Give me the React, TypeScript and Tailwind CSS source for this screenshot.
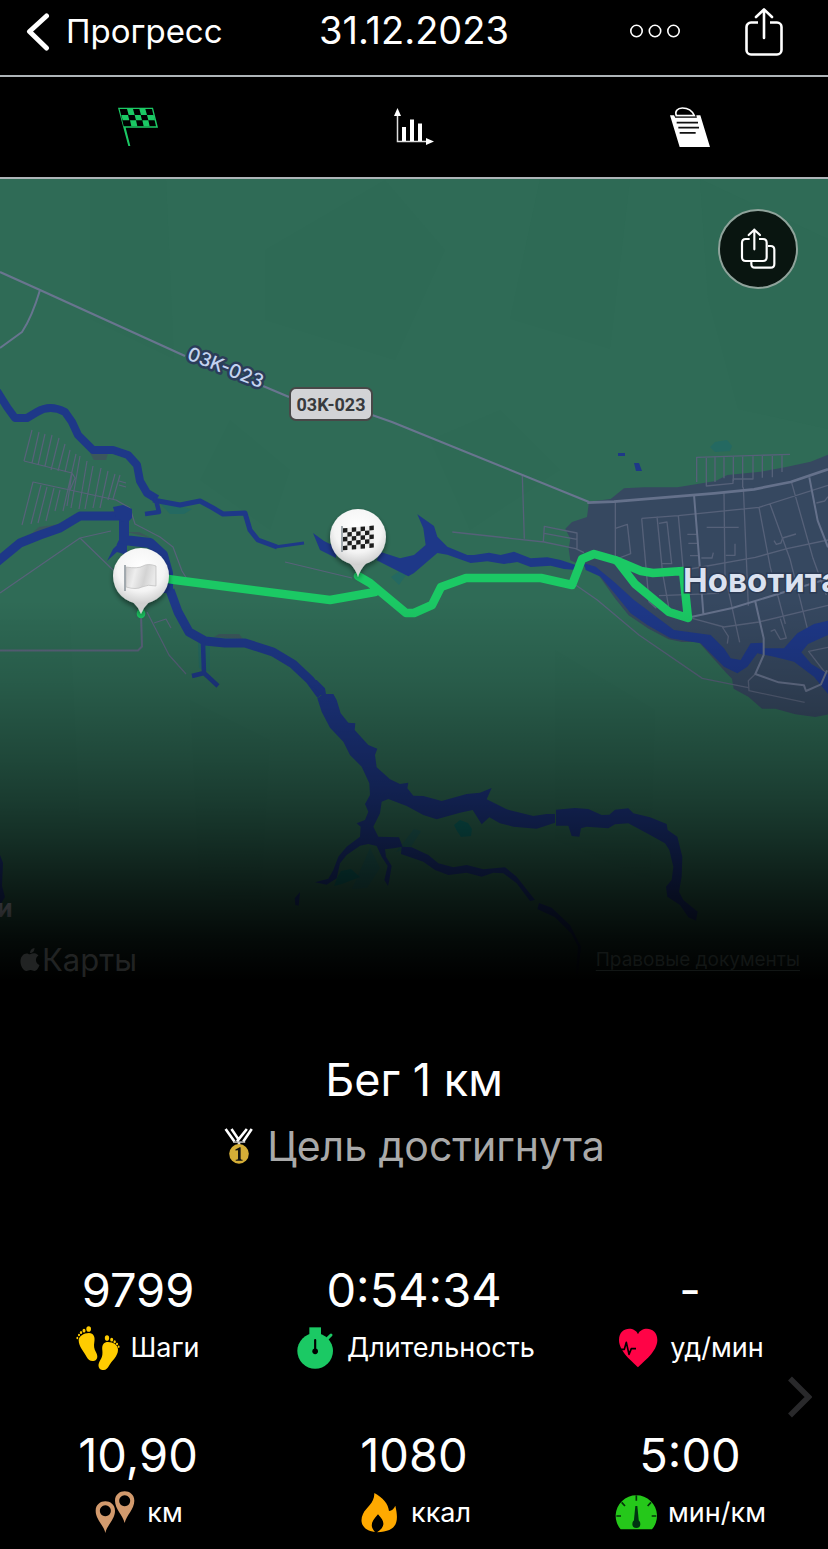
import type { ReactNode } from "react";

const GREEN = "#1bc964";

function BackIcon() {
  return (
    <svg className="h-10 w-6" viewBox="0 0 24 40" fill="none" stroke="#fff" strokeWidth="5" strokeLinecap="round" strokeLinejoin="round" aria-hidden="true">
      <path d="M20.5 4 3.500 19.500 20.5 36" />
    </svg>
  );
}

function MoreIcon() {
  return (
    <svg className="h-4 w-13" viewBox="0 0 52 16" fill="none" stroke="#fff" strokeWidth="1.6" aria-hidden="true">
      <circle cx="8.5" cy="7" r="5.7" />
      <circle cx="27" cy="7" r="5.7" />
      <circle cx="45.5" cy="7" r="5.7" />
    </svg>
  );
}

function ShareIcon() {
  return (
    <svg className="h-12 w-10" viewBox="0 2 40 48" fill="none" stroke="#fff" strokeWidth="2.6" strokeLinecap="round" strokeLinejoin="round" aria-hidden="true">
      <path d="M14 16.500H7a4.500 4.500 0 0 0-4.500 4.500v23A4.500 4.500 0 0 0 7 48.500h26a4.500 4.500 0 0 0 4.500-4.500V21a4.500 4.500 0 0 0-4.500-4.500h-7" strokeLinecap="butt" />
      <path d="M20 32V4M12 11 20 3.400l8 7.600" />
    </svg>
  );
}

function FlagTabIcon() {
  return (
    <svg className="h-10 w-10" viewBox="354 321 120 120" aria-hidden="true">
      <g fill={GREEN}>
        <path d="M354 323h105l15 60h-97l14 55h-6zM359 327l12 52h97l-12-52z" fillRule="evenodd" />
        <path d="M381 327h18l5 18h-18zM418 327h18l5 18h-18zM364 345h20l4 16h-20zM404 345h18l4 16h-18zM441 345h20l4 16h-20zM390 361h18l4 18h-18zM427 361h18l4 18h-18z" />
      </g>
    </svg>
  );
}

function ChartTabIcon() {
  return (
    <svg className="h-10 w-10" viewBox="0 0 40 40" aria-hidden="true">
      <path d="M3.500 8v26.500H34" fill="none" stroke="#ddd" strokeWidth="1.500" />
      <path d="M3.500 1 7 9H0zM40 34.500l-8 3.600v-7.200z" fill="#fff" />
      <path d="M8 20h4v14H8zM16 12.500h4V34h-4zM24 16.500h4V34h-4z" fill="#fff" />
    </svg>
  );
}

function NotesTabIcon() {
  return (
    <svg className="h-10 w-10" viewBox="768 320 120 120" aria-hidden="true">
      <path d="M768 345h12l4 7h64l-1-7h12l29 95h-91z" fill="#fff" />
      <path d="M787 346c-5-13 3-23 18-23 16 0 30 9 36 23z" fill="#000" stroke="#fff" strokeWidth="5" />
      <path d="M788 367h64M793 382h62M797 397.500h48" stroke="#111" strokeWidth="5" />
      <path d="M784 351h64" stroke="#444" strokeWidth="3" />
    </svg>
  );
}

function ShareMapIcon() {
  return (
    <svg className="h-11 w-10" viewBox="90 82 120 132" fill="none" stroke="#fff" strokeWidth="6.500" strokeLinecap="round" strokeLinejoin="round" aria-hidden="true">
      <path d="M125 118h-12q-11 0-11 11v44q0 11 11 11h52q11 0 11-11v-44q0-11-11-11h-12" strokeLinecap="butt" />
      <path d="M139 149V90M122 106l17-16 17 16" />
      <path d="M180 139h8q11 0 11 11v43q0 11-11 11h-47q-11 0-11-11v-6" strokeLinecap="butt" />
    </svg>
  );
}

function MedalIcon() {
  return (
    <svg className="h-9 w-8" viewBox="28 22 96 110" aria-hidden="true">
      <path d="M35 25l27 38M53 25l23 34M100 25L70 63M115 25L89 63" fill="none" stroke="#fff" strokeWidth="8" />
      <path d="M58 65h37" stroke="#ddd" strokeWidth="4" />
      <path d="M76 66v8" stroke="#ddd" strokeWidth="8" />
      <circle cx="76" cy="101" r="30" fill="#d5ae37" />
      <path d="M65 88l13-7h3v34q0 4 5 4h1v3H66v-3h2q5 0 5-4V90l-8 1z" fill="#111" />
    </svg>
  );
}

function StepsIcon() {
  return (
    <svg className="h-11 w-11" viewBox="225 195 132 132" fill="#ffcc00" aria-hidden="true">
      <path d="M233 238c0-12 15-22 31-22 14 0 19 12 16 27-2 12-1 20 5 31 8 15 3 25-8 26-9 1-15-3-20-12-8-16-24-31-24-50z" />
      <ellipse cx="263" cy="204" rx="7" ry="8.500" />
      <ellipse cx="249" cy="209" rx="4.500" ry="5.500" />
      <ellipse cx="240" cy="214.500" rx="3.500" ry="4.500" />
      <ellipse cx="234" cy="222" rx="3" ry="4" />
      <ellipse cx="229" cy="231" rx="2.700" ry="3.600" />
      <path d="M351 266c0-14-14-23-30-23-14 0-19 11-17 25 1 12 0 20-6 29-9 15-7 28 6 30 9 1 15-4 20-13 8-15 27-28 27-48z" />
      <ellipse cx="318" cy="231" rx="6.500" ry="8.500" />
      <ellipse cx="332" cy="236" rx="4.500" ry="5.500" />
      <ellipse cx="341" cy="242" rx="3.500" ry="4.500" />
      <ellipse cx="348" cy="249" rx="3" ry="4" />
      <ellipse cx="353" cy="257" rx="2.700" ry="3.600" />
    </svg>
  );
}

function TimerIcon() {
  return (
    <svg className="h-11 w-11" viewBox="879 195 132 132" aria-hidden="true">
      <circle cx="945.500" cy="270" r="53.500" fill={GREEN} />
      <path d="M928 199h35v24h-35z" fill={GREEN} />
      <path d="M979 236l14-14" stroke={GREEN} strokeWidth="9" strokeLinecap="round" />
      <path d="M945.500 237v34" stroke="#000" strokeWidth="6.500" strokeLinecap="round" />
      <circle cx="945.500" cy="271" r="8.500" fill="#000" />
    </svg>
  );
}

function HeartIcon() {
  return (
    <svg className="h-11 w-11" viewBox="606 195 132 132" aria-hidden="true">
      <path d="M672 319c-16-17-57-47-57-82 0-40 47-42 57-17 10-25 58-23 58 17 0 35-42 65-58 82z" fill="#ff0346" />
      <path d="M618 265h13l6-21 8 36 7-17h14" fill="none" stroke="#000" strokeWidth="5" strokeLinejoin="round" />
    </svg>
  );
}

function DistanceIcon() {
  return (
    <svg className="h-11 w-11" viewBox="279 693 132 132" fill="#d29a6d" fillRule="evenodd" aria-hidden="true">
      <path d="M316 819c-5-24-29-41-29-67 0-38 58-38 58 0 0 26-24 43-29 67zM316 736a16.500 16.500 0 1 0 .1 0z" />
      <path d="M374 789c-5-24-29-41-29-67 0-38 58-38 58 0 0 26-24 43-29 67zM374 706a16.500 16.500 0 1 0 .1 0z" />
    </svg>
  );
}

function FlameIcon() {
  return (
    <svg className="h-11 w-11" viewBox="1071 693 132 132" aria-hidden="true">
      <path d="M1123 699c25 13 42 33 44 54 9-1 15-7 19-16 13 55 1 77-55 80 25-17 25-31 3-54-22 24-24 36-9 53-36-4-48-29-36-54 9-20 35-31 34-63z" fill="#ffa900" />
    </svg>
  );
}

function PaceIcon() {
  return (
    <svg className="h-11 w-11" viewBox="600 693 132 132" aria-hidden="true">
      <path d="M620 808a62 62 0 1 1 94 0z" fill="#25c81a" />
      <path d="M667 706v16M623 727l10 11M711 727l-10 11M607 768h14M727 768h-14" stroke="#05300a" strokeWidth="5" />
      <path d="M664 738h6l5 50h-16z" fill="#031" />
      <circle cx="667" cy="792" r="12" fill="#031" />
    </svg>
  );
}

function Terrain() {
  return (
    <g fill="#1f5a45" opacity="0.04">
      <path d="M90 179h76l8 180-84-40zM265 250l120-70 60 70-50 110-130-40z" />
      <path d="M540 179h90l-20 170-100-30zM700 179l128 60v190l-90-20-30-110z" />
      <path d="M230 420l60 50-20 60-70-50zM430 440l70-30 60 60-90 60zM0 620h70l10 210H0z" />
      <path d="M190 700l80 40-10 170-60-20zM555 650l100 60-5 170-95-40z" />
    </g>
  );
}

function Roads() {
  return (
    <g fill="none" strokeLinejoin="round">
      <g stroke="#58627a" strokeWidth="1.200">
        <path d="M24 461l48 12 3 5-5 12-37-8-11 43M70 490l46 10 14 8M72 473l-5 33M32 430l-8 31M39 432l-7 31M45 434l-7 31M52 435l-7 31M59 438l-8 32M65 444l-7 27M70 450l-5 22M76 454l-13 57M80 456l-9 52M87 461l-8 48M93 466l-8 43M101 468l-8 40M108 471l-8 37M115 474l-7 26M120 475l-7 24M119 481l7 2M119 485l7 2M41 485l-10 39M47 487l-9 36M54 488l-8 33M60 490l-5 21" />
        <path d="M0 593l80-55 31-7M80 538l33 32M130 508l5 16 25 13 13 10 9 24 5 8M147 612l22 43 17 19M154 623l12-4 5 9M285 562l67 16" />
      </g>
      <path d="M0 650.500h138l4-4-1-33" stroke="#59627a" strokeWidth="2" />
      <path d="M0 272l40 18 145 66M263 386l26 11M372 415l20 7 197 80" stroke="#69758f" strokeWidth="2.200" />
      <path d="M40 290q-8 27-18 42L0 348" stroke="#687590" strokeWidth="2" />
    </g>
  );
}

function Town() {
  return (
    <g transform="translate(414 400) scale(0.33333)">
      <path d="M525 305l65-8 40-32 60-3h100l115-19 35-18 100-10 80-15 70-15 56-22v780l-42 8-60-8-60-17h-40l-40-35-45-25-5-30-15-15-85-95h-50l-40-8-60-32-60-40-40-50-50-70-40-25-45-20-5-35 5-30-15-30 20-20 45-15z" fill="#364860" />
      <g fill="none" stroke="#566179" strokeWidth="4" strokeLinejoin="round">
        <path d="M115 396l275 30 95 20 25 12M325 228l6 188M388 425l3-46 98 20v50M391 400l98 18" />
        <path d="M848 246v-74l280-9M877 172v86l80-8v-13h60v-70M903 170v76M930 170v65M958 168v75M986 168v95M1045 166v67M1075 165v67M1104 164v52" />
        <path d="M604 305v170M604 385l36-12 10 88-42 16M683 355l110-8 242-25 207-66M683 355l22 250 22 20M729 350l17 170 18 100M735 370l24-4 14 125h-28M793 347l14 155M930 275l3 250 44 202M988 262l15 355M1035 322l34 180 45 170M1068 312l60 165 52 208M1132 245l65 230 40 110" />
        <path d="M812 510l212-38 95-26 123-26M735 587l180-7M835 655l95 26 105-15 207-50M925 681l18 28-3 22M820 403h30M823 430h28M828 467h25M862 474h32l4-16M935 466h28v-35M878 382h96M1080 422l7 11 14-4 5-15 40-12M1070 694l12-5 17 29 18-4-18-58M1242 290l-10 13-25 6M1242 742l-58 12 50 65" />
        <path d="M485 555l65 45 125 105 190 130 138 28M1024 822l-21 20 2 30 167 35" />
      </g>
    </g>
  );
}

function TownMainRoads() {
  return (
    <g transform="translate(414 400) scale(0.33333)" fill="none" stroke="#65718b" strokeWidth="6" strokeLinejoin="round">
      <path d="M520 308l80-3 300-25 120-12 110-22 112-38" strokeWidth="8" />
      <path d="M840 284l14 174 14 182M828 652l127-28 287-88M1186 232l25 130 31 80M1024 605l25 110v50l-25 57 70 25 76 9 6 17 45-20 18-42" />
    </g>
  );
}

function Water() {
  return (
    <>
      <g fill="#1f6867" opacity="0.7">
        <path d="M710 447l5-5 12-2 5 6-2 5-15 1zM160 503l22 4 10 2-8 5h-14zM391 577l10-7 7 2-9 13zM198 643h12v29l-11-4zM396 852l18-23 7 2-10 16zM370 848l10 20-13 20-15 1z" />
      </g>
      <path d="M454 825l6-5 8 3 4 6-1 7-10 1-4-6zM337 878l4-7 10-2 9 8-18 7-8 2z" fill="#056a68" opacity="0.8" />
      <g fill="#44495f" opacity="0.6">
        <path d="M90 453h18l-2 7H94zM30 535l9-8 22-3-8 8zM214 637l5-3h20l4 5zM110 512l10-4 5 8zM127 532l12 0 12 6zM348 745l8 16 10 7z" />
      </g>
      <g fill="none" stroke="#1e3888" strokeLinejoin="round">
        <path d="M-3 391l10 16 8 11h12l10-6q13-8 28 0l7 10 6 13 15 15h20l15 5 9 10 3 16 7 12 10 6" strokeWidth="8" />
        <path d="M153 500l27 5 20-4 13 7 10 6 22-1 5 17 8 10 19 7" strokeWidth="5" />
        <path d="M275 547l29-4" strokeWidth="3" />
        <path d="M156 500l3 12-14 2" strokeWidth="4.500" />
        <path d="M-3 562l23-19 20-8 20-7 20-12h44" strokeWidth="9" />
        <path d="M124 508v33l-3 6M124 540l26 3 13 12 5 18v20" strokeWidth="10" />
        <path d="M170 590l8 22 11 20 16 9 20 2h20l28 9 20 12 17 16 11 15" strokeWidth="9" />
        <path d="M203 643l1 31M192 676l12-3 14 13" strokeWidth="4.500" />
      </g>
      <g fill="#1e3888">
        <path d="M113 507l10-2 9 4v9l-6 6-10-7zM119 543l-6 6-6 12 10-9 10 3v-10z" />
        <path d="M313 533l11 8 12 6v11l-16-8zM0 855l3 8-1 23 3 11-5 8zM618 453h7v3h-7zM634 463h5l3 8h-6z" />
        <path transform="translate(414 400) scale(0.33333)" d="M-102 455l60 20 42-10 35-30-7-50-18-42 50 35 10 32 30 30 60 25h20l45-7 35 7 40-10 50 20 50-3 40 8 45 15v15l-35-3-40-10-60 4-40-15-40 6-50-8-50 5-70-25-30-5-70 60-17 10-95-48z" />
        <path transform="translate(414 400) scale(0.33333)" d="M510 490l35 10 55 45 60 55 40 30 80 60 110 15 40 40 20 30 30 5 30-50 40-2v17h60l40-45 50-28 44-10v42l-62 28-20 25 30 35 50 30v60l-42-52-60-45-60-15-50-10-30 40-30 20-40-20-70-70-90-15-70-40-50-35-40-50-50-60-45-20z" />
        <g transform="translate(200 680) scale(0.33333)">
          <path d="M315 0L350 0L375 25L378 42L400 42L410 60L422 100L445 128L466 130L464 150L505 195L532 206L525 225L530 262L570 298L600 312L625 308L622 325L640 347L670 348L725 363L800 342L840 338L875 324L860 358L920 388L1000 408L1040 402L1065 402L1065 428L1010 446L940 440L900 430L868 412L845 433L818 390L780 398L710 418L670 405L620 378L565 357L545 365L540 400L520 440L535 470L597 472L608 500L580 505L555 508L558 530L575 558L568 600L564 618L553 600L563 558L545 530L530 498L505 492L480 497L440 525L420 550L410 595L380 614L345 607L385 596L400 570L415 530L440 500L480 470L482 440L470 430L495 420L505 395L495 372L510 345L508 310L485 260L450 225L430 185L390 143L365 95L352 55L365 45Z" />
          <path d="M1068 389L1125 384L1165 387L1205 405L1228 404L1245 389L1285 385L1300 400L1350 412L1400 432L1403 450L1432 470L1447 530L1445 590L1437 635L1450 660L1493 695L1488 722L1465 712L1440 675L1402 650L1398 620L1415 600L1420 560L1408 510L1395 490L1345 462L1285 430L1245 433L1225 445L1160 440L1143 445L1138 470L1115 468L1105 437L1068 437Z" />
          <path d="M605 500L635 502L685 525L715 550L760 562L800 555L850 568L915 562L950 590L1005 660L990 663L950 610L910 580L880 578L845 590L800 578L745 585L705 570L670 545L603 522ZM1017 669L1055 683L1110 735L1143 800L1134 882L1128 880L1134 800L1115 762L1065 712L1012 687ZM300 636L296 677L286 675L284 655Z" />
        </g>
      </g>
    </>
  );
}

function Pin({ x, y, tip, children }: { x: number; y: number; tip: number; children: ReactNode }) {
  return (
    <g transform={`translate(${x} ${y})`}>
      <g filter="url(#pin-shadow)">
        <path d={`M-21 18Q-4 26 0 ${tip}Q4 26 21 18z`} fill="#d2d2d2" />
        <circle r="28" fill="url(#pin-fill)" />
      </g>
      {children}
    </g>
  );
}

const checks = Array.from({ length: 35 }, (_, i) => i).filter((i) => (Math.floor(i / 7) + (i % 7)) % 2 === 0);

function RouteMap() {
  return (
    <svg className="block w-full font-[Inter,sans-serif]" viewBox="0 179 828 821" role="img" aria-label="Карта маршрута">
      <defs>
        <radialGradient id="pin-fill" cx="0.5" cy="0.35" r="0.65">
          <stop offset="0" stopColor="#fff" />
          <stop offset="0.65" stopColor="#f4f4f4" />
          <stop offset="1" stopColor="#cfcfcf" />
        </radialGradient>
        <linearGradient id="flag-fill" x1="0" y1="0" x2="1" y2="0.2">
          <stop offset="0" stopColor="#ccc" />
          <stop offset="0.35" stopColor="#eee" />
          <stop offset="0.7" stopColor="#d3d3d3" />
          <stop offset="1" stopColor="#e9e9e9" />
        </linearGradient>
        <linearGradient id="map-fade" gradientUnits="userSpaceOnUse" x1="0" y1="600" x2="0" y2="1000">
          <stop offset="0" stopColor="#000" stopOpacity="0" />
          <stop offset="0.2" stopColor="#000" stopOpacity="0.14" />
          <stop offset="0.4" stopColor="#000" stopOpacity="0.33" />
          <stop offset="0.5" stopColor="#000" stopOpacity="0.44" />
          <stop offset="0.6" stopColor="#000" stopOpacity="0.57" />
          <stop offset="0.7" stopColor="#000" stopOpacity="0.71" />
          <stop offset="0.85" stopColor="#000" stopOpacity="0.91" />
          <stop offset="0.95" stopColor="#000" />
        </linearGradient>
        <filter id="pin-shadow" x="-30%" y="-30%" width="160%" height="160%">
          <feDropShadow dx="0" dy="3" stdDeviation="2.500" floodColor="#000" floodOpacity="0.45" />
        </filter>
      </defs>
      <rect y="179" width="828" height="821" fill="#2f6b56" />
      <Terrain />
      <Town />
      <Roads />
      <Water />
      <TownMainRoads />
      <g fill="none" stroke={GREEN} strokeWidth="8.500" strokeLinejoin="round" strokeLinecap="round">
        <path d="M155 577l20 3 155 20 45-8M358 576l12 7 36 30 8 0 18-8 9-18 25-9h75l31 7 10-26 12-5 21 6 26 11 12 2 30-2 5 47-19-6-34-28-17-22M141 613v1" />
      </g>
      <text x="683" y="592" fontSize="33" fontWeight="700" fill="#dbe2f0" stroke="#2c3a53" strokeWidth="3" paintOrder="stroke">Новотита</text>
      <text x="-3" y="917" fontSize="25" fontWeight="700" fill="#dbe2f0">и</text>
      <text transform="translate(186 359) rotate(21.500)" fontSize="19" fontWeight="500" fill="#c4d3f0" stroke="#2b3d59" strokeWidth="5" strokeLinejoin="round" paintOrder="stroke">03K-023</text>
      <rect x="290" y="388" width="82" height="32" rx="6" fill="#d2d3d6" stroke="#484848" strokeWidth="2" />
      <text className="font-[Roboto,sans-serif]" x="331" y="411" fontSize="18" fontWeight="700" textAnchor="middle" fill="#383a3d">03K-023</text>
      <Pin x={141} y={576} tip={38}>
        <path d="M-15-9q12 2 17-1t13 0v20q-8-2-14 1t-16 0z" fill="url(#flag-fill)" stroke="#bbb" strokeWidth="0.700" />
        <path d="M-16-11v26" stroke="#9aa2a8" strokeWidth="1.800" />
      </Pin>
      <Pin x={358} y={537} tip={40}>
        <g transform="skewY(-5)">
          <path d="M-15-10h31v22h-31z" fill="#eee" />
          {checks.map((i) => (
            <rect key={i} x={-15 + (i % 7) * 4.4} y={-10 + Math.floor(i / 7) * 4.4} width="4.400" height="4.400" fill="#1c1c1c" />
          ))}
        </g>
        <path d="M-16-11v26" stroke="#9aa2a8" strokeWidth="1.800" />
      </Pin>
      <rect y="600" width="828" height="400" fill="url(#map-fade)" />
    </svg>
  );
}

function AppleIcon() {
  return (
    <svg className="h-6 w-5" viewBox="0 0 20 24" fill="currentColor" aria-hidden="true">
      <path d="M10.500 6c2-.8 5.500-1.500 8 1.500-4 2.500-3 8 1 9.500-1 3-3 6-5 6-1.500 0-2-1-4-1s-2.500 1-4 1C3 23 0 17 .5 12.500 1 7.500 5 4.500 8.500 6q1 .5 2 0zM10 5c0-3 2-4.600 4.500-5 .2 3-2 5-4.500 5z" />
    </svg>
  );
}

const tabs = [
  { label: "Маршрут", icon: <FlagTabIcon /> },
  { label: "Графики", icon: <ChartTabIcon /> },
  { label: "Заметки", icon: <NotesTabIcon /> },
];

const stats = [
  { value: "9799", label: "Шаги", icon: <StepsIcon /> },
  { value: "0:54:34", label: "Длительность", icon: <TimerIcon /> },
  { value: "-", label: "уд/мин", icon: <HeartIcon /> },
  { value: "10,90", label: "км", icon: <DistanceIcon /> },
  { value: "1080", label: "ккал", icon: <FlameIcon /> },
  { value: "5:00", label: "мин/км", icon: <PaceIcon /> },
];

export default function App() {
  return (
    <div className="min-h-screen overflow-x-hidden bg-black font-[Inter,'Noto_Sans',sans-serif] text-white">
      <header className="grid grid-cols-[1fr_auto_1fr] items-start border-b-2 border-[#aeb4b8] px-6.5 pb-3">
        <button type="button" className="flex items-center gap-4 text-[33px] leading-[63px]">
          <BackIcon />
          Прогресс
        </button>
        <h1 className="text-[38px] leading-[60px]">31.12.2023</h1>
        <div className="mr-[18px] flex h-[63px] items-center justify-end gap-16">
          <button type="button" aria-label="Ещё">
            <MoreIcon />
          </button>
          <button type="button" aria-label="Поделиться">
            <ShareIcon />
          </button>
        </div>
      </header>

      <nav className="grid h-[102px] grid-cols-3 border-b-2 border-[#aeb4b8]">
        {tabs.map((tab) => (
          <button key={tab.label} type="button" aria-label={tab.label} className="flex items-center justify-center">
            {tab.icon}
          </button>
        ))}
      </nav>

      <main>
        <section className="relative">
          <RouteMap />
          <button type="button" aria-label="Поделиться картой" className="absolute top-[30px] right-[30px] flex size-20 items-center justify-center rounded-full border-2 border-[#8fa39b] bg-[#091510]">
            <ShareMapIcon />
          </button>
          <div className="absolute inset-x-0 bottom-5 flex items-center justify-between pr-7 pl-5">
            <span className="flex items-center gap-0.5 text-[31px] leading-10 text-[#212323]">
              <AppleIcon />
              Карты
            </span>
            <a href="#legal" className="text-[19px] leading-10 text-[#121615] underline underline-offset-4">
              Правовые документы
            </a>
          </div>
        </section>

        <section className="flex flex-col items-center gap-2 pt-[50px]">
          <h2 className="text-[45px] leading-[60px]">Бег 1 км</h2>
          <p className="flex items-center gap-3 text-[41px] leading-[56px] text-[#a9a9a9]">
            <MedalIcon />
            Цель достигнута
          </p>
        </section>

        <section className="relative pt-[88px] pb-3">
          <dl className="grid grid-cols-3 gap-y-[57px]">
            {stats.map((stat) => (
              <div key={stat.label} className="flex flex-col-reverse items-center gap-2">
                <dt className="flex items-center gap-2.5 text-[27px] leading-11">
                  {stat.icon}
                  {stat.label}
                </dt>
                <dd className="text-[47px] leading-[56px]">{stat.value}</dd>
              </div>
            ))}
          </dl>
          <button type="button" aria-label="Далее" className="absolute top-[201px] right-4">
            <svg className="h-11 w-6" viewBox="0 0 24 44" fill="none" stroke="#29292b" strokeWidth="5.500" aria-hidden="true">
              <path d="M2 3.500 20.500 22 2 40.500" />
            </svg>
          </button>
        </section>
      </main>
    </div>
  );
}
